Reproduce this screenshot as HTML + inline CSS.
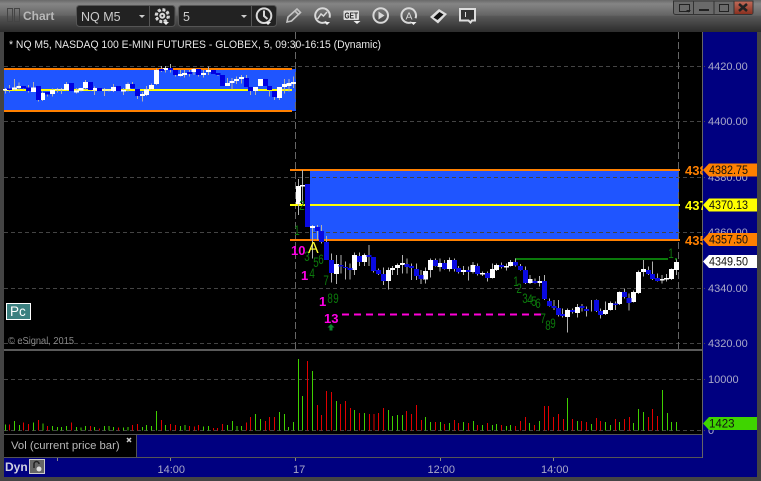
<!DOCTYPE html>
<html><head><meta charset="utf-8"><style>
html,body{margin:0;padding:0;background:#444;width:761px;height:481px;overflow:hidden}
svg{display:block}
text{font-family:"Liberation Sans",sans-serif;font-size:11px}
.ax{fill:#a9a9c8;font-size:11px}
.g{fill:#0c7a0c;font-size:14px}
.m{fill:#ff00e6;font-size:13px;font-weight:bold}
.tag{fill:#111;font-size:11.500px}
</style></head><body>
<svg width="761" height="481" viewBox="0 0 761 481" xmlns="http://www.w3.org/2000/svg">
<defs><linearGradient id="tb" x1="0" y1="0" x2="0" y2="1">
<stop offset="0" stop-color="#6a6a6a"/><stop offset=".12" stop-color="#858585"/><stop offset=".48" stop-color="#646464"/><stop offset=".5" stop-color="#585858"/><stop offset="1" stop-color="#2c2c2c"/></linearGradient>
<linearGradient id="cl" x1="0" y1="0" x2="0" y2="1"><stop offset="0" stop-color="#c06a58"/><stop offset="1" stop-color="#8a3020"/></linearGradient></defs>
<rect width="761" height="481" fill="#444"/>
<rect width="761" height="32" fill="url(#tb)"/>
<!-- pane -->
<rect x="4" y="32" width="699" height="318" fill="#000"/>
<rect x="4" y="351" width="699" height="84" fill="#000"/>
<rect x="703" y="32" width="54" height="426" fill="#000080"/>
<rect x="4" y="458" width="753" height="19" fill="#000080"/>
<rect x="136.500" y="435" width="566" height="23" fill="#000080"/>
<rect x="4" y="349" width="699" height="2" fill="#5a5a5a"/>
<rect x="4" y="435" width="132" height="23" fill="#000"/>
<rect x="4" y="434" width="699" height="1" fill="#555"/>
<rect x="136" y="435" width="1" height="23" fill="#555"/>
<rect x="4" y="457" width="699" height="1" fill="#555"/>
<rect x="702" y="32" width="1" height="426" fill="#666"/>
<!-- blue zones -->
<rect x="4" y="69" width="292" height="42" fill="#1f55ff"/>
<rect x="310" y="171" width="369" height="69" fill="#1f55ff"/>
<!-- grid -->
<g stroke="#444" stroke-width="1" stroke-dasharray="4 3" fill="none" shape-rendering="crispEdges">
<path d="M4 66.500H705M4 121.500H705M4 177.500H705M4 232.500H705M4 288.500H705M4 343.500H705M4 379.500H705M4 430.500H705"/>
</g>
<g stroke="#666" stroke-width="1" stroke-dasharray="7 3" fill="none" shape-rendering="crispEdges">
<path d="M295.500 32V349M678.500 32V349"/>
</g>
<!-- zone lines -->
<g shape-rendering="crispEdges">
<rect x="4" y="68" width="288" height="2" fill="#ff8000"/>
<rect x="4" y="110" width="288" height="2" fill="#ff8000"/>
<rect x="4" y="89" width="288" height="2" fill="#ffff00"/>
<rect x="290" y="169" width="390" height="2" fill="#ff8000"/>
<rect x="290" y="204" width="390" height="2" fill="#ffff00"/>
<rect x="290" y="239" width="390" height="2" fill="#ff8000"/>
<rect x="515" y="258" width="153" height="2" fill="#0a7a0a"/>
<rect x="675" y="258" width="2" height="2" fill="#0a7a0a"/>
</g>
<path d="M342 314.500H542" stroke="#ff00d8" stroke-width="2" stroke-dasharray="7 5" fill="none" shape-rendering="crispEdges"/>
<!-- premarket candles -->
<g transform="translate(0,60) scale(.33333)" fill="none" shape-rendering="crispEdges">
<path stroke="#b0b0b0" stroke-width="3" d="M16 84V100M28 75V98M43 57V92M57 68V90M71 78V90M85 75V98M100 66V96M115 78V125M127 95V123M142 96V110M157 85V110M172 84V98M185 84V102M199 66V92M214 69V93M229 84V100M243 84V95M257 60V90M271 66V92M284 80V105M298 84V93M313 84V108M327 88V95M341 72V96M355 78V93M370 84V105M384 68V95M398 66V85M412 87V117M427 96V125M440 78V108M454 70V90M469 25V75M484 18V36M497 18V38M511 12V38M526 30V50M541 30V50M554 30V52M568 30V50M582 24V45M596 27V50M610 30V52M625 20V45M640 30V42M654 39V48M667 45V78M682 54V78M696 54V88M710 50V72M724 45V70M739 45V81M751 81V105M766 81V105M781 57V78M796 57V78M809 78V110M824 93V120M838 81V120M853 57V100M867 57V95M881 50V84"/>
<path stroke="#fff" stroke-width="15" d="M16 87V92M43 82V88M57 78V84M100 82V96M127 99V120M157 90V102M172 88V90M185 88V90M199 72V90M229 92V98M243 84V92M257 66V84M284 84V92M313 88V92M327 88V92M341 81V93M370 90V95M384 72V87M427 102V108M440 88V105M454 75V87M469 30V72M497 24V30M541 42V48M554 39V45M582 27V36M610 39V45M625 30V36M682 69V78M696 63V69M710 57V63M724 51V57M766 81V93M781 57V78M838 81V114M853 72V81M867 69V78M881 66V72"/>
<path stroke="#0000e0" stroke-width="15" d="M28 85V90M71 78V86M85 82V93M115 78V120M142 96V104M214 69V93M271 66V90M298 84V93M355 78V93M398 72V85M412 87V108M484 27V33M511 24V30M526 30V45M568 36V42M596 27V45M640 30V42M654 39V45M667 45V78M739 54V81M751 81V93M796 57V78M809 78V90M824 93V111"/>
</g>
<!-- main candles -->
<g transform="translate(270,160) scale(.33333)" fill="none" shape-rendering="crispEdges">
<path stroke="#b0b0b0" stroke-width="3" d="M85 57V165M97 30V130M112 72V201M127 195V295M142 195V240M155 195V250M169 228V300M184 280V368M199 285V372M213 285V340M226 305V358M240 310V358M254 278V345M268 278V318M283 280V318M297 255V318M311 291V338M326 325V345M340 322V375M355 322V388M368 318V345M382 310V345M397 285V340M411 295V340M425 310V360M439 310V360M453 330V372M467 322V370M482 295V352M496 295V320M510 295V335M524 300V328M539 292V335M553 295V335M566 318V340M580 318V345M595 320V362"/>
<path stroke="#fff" stroke-width="15" d="M85 78V132M97 75V79M127 198V204M199 312V342M254 285V330M283 285V306M355 330V363M368 324V330M382 315V324M397 309V315M467 333V358M482 300V330M510 309V321M539 300V327M580 330V336"/>
<path stroke="#0a0ae0" stroke-width="15" d="M112 72V201M142 201V213M155 213V246M169 246V300M184 300V339M213 315V320M226 321V324M240 324V330M268 288V306M297 285V291M311 291V333M326 330V342M340 342V363M411 312V321M425 318V324M439 327V348M453 345V357M496 300V318M524 309V327M553 300V327M566 324V336M595 330V336"/>
</g>
<!-- right candles -->
<g transform="translate(470,160) scale(.33333)" fill="none" shape-rendering="crispEdges">
<path stroke="#b0b0b0" stroke-width="3" d="M9 306V340M23 310V346M38 335V348M52 335V365M67 310V356M80 310V333M95 308V325M109 310V332M122 300V320M137 295V320M152 312V332M166 320V372M180 345V372M195 355V370M209 348V380M224 345V420M238 415V440M252 420V450M266 420V470M278 445V472M292 445V518M308 445V460M322 432V472M336 432V455M350 440V470M364 420V455M379 418V456M392 445V475M406 425V465M421 425V452M436 425V450M449 395V435M463 385V415M477 400V452M491 392V428M505 332V402M520 300V350M535 320V345M548 305V360M562 340V365M576 345V370M590 342V365M604 325V360M619 298V345"/>
<path stroke="#fff" stroke-width="15" d="M9 315V336M38 339V344M67 327V354M80 315V330M109 318V323M122 306V318M180 357V369M209 363V369M292 450V471M322 441V459M406 450V462M421 429V450M449 396V432M491 396V426M505 336V399M520 327V336M576 357V362M590 354V359M604 327V357M619 306V330"/>
<path stroke="#0a0ae0" stroke-width="15" d="M23 318V342M52 339V354M95 315V321M137 306V316M152 318V330M166 330V369M195 363V369M224 363V417M238 423V438M252 438V444M266 444V465M278 462V468M308 450V456M336 438V444M350 447V453M379 420V453M392 453V465M436 430V435M463 396V411M477 414V429M535 330V342M548 342V357M562 354V363"/>
</g>
<!-- volume -->
<g transform="translate(0,345) scale(.33333)" fill="none" stroke-width="3" shape-rendering="crispEdges">
<path stroke="#3fd000" d="M16 238V256M43 228V256M58 240V256M100 232V256M129 236V256M157 243V256M172 246V256M185 246V256M199 243V256M229 246V256M243 248V256M256 243V256M284 246V256M313 243V256M327 243V256M341 246V256M370 248V256M384 246V256M427 246V256M439 240V256M454 243V256M469 198V256M497 240V256M541 243V256M555 240V256M611 245V256M625 243V256M682 240V256M697 228V256M711 243V256M725 243V256M767 207V256M782 222V256M838 201V256M853 207V256M866 246V256M880 231V256M895 42V256M907 153V256M937 78V256M1009 168V256M1064 195V256M1093 204V256"/>
<path stroke="#e00000" d="M28 238V256M71 232V256M86 237V256M115 225V256M142 243V256M214 232V256M271 243V256M298 250V256M355 247V256M398 240V256M412 237V256M484 225V256M511 237V256M526 240V256M569 243V256M583 245V256M596 240V256M640 249V256M653 249V256M668 237V256M739 232V256M752 216V256M796 228V256M809 216V256M824 216V256M922 48V256M952 180V256M965 210V256M980 138V256M994 141V256M1022 177V256M1036 168V256M1051 189V256M1079 204V256M1108 207V256M1122 207V256M1136 204V256"/>
</g>
<g transform="translate(380,345) scale(.33333)" fill="none" stroke-width="3" shape-rendering="crispEdges">
<path stroke="#3fd000" d="M25 195V256M38 213V256M52 210V256M67 210V256M137 216V256M151 231V256M181 231V256M208 234V256M250 231V256M280 228V256M307 240V256M338 240V256M350 237V256M380 243V256M392 240V256M449 234V256M478 228V256M563 159V256M592 228V256M634 237V256M677 231V256M691 240V256M719 231V256M760 234V256M775 192V256M790 201V256M847 135V256M862 204V256M874 231V256M889 231V256"/>
<path stroke="#e00000" d="M10 189V256M80 198V256M94 207V256M109 180V256M124 225V256M166 231V256M194 237V256M223 225V256M236 234V256M265 234V256M293 240V256M322 234V256M365 240V256M407 243V256M421 228V256M436 216V256M463 240V256M493 183V256M506 183V256M520 216V256M535 207V256M550 222V256M578 222V256M604 228V256M619 231V256M649 219V256M662 228V256M706 222V256M733 222V256M748 216V256M805 216V256M817 192V256M832 213V256"/>
</g>
<!-- numeric labels -->
<g transform="scale(.7,1)">
<text class="g" x="427.600" y="210">2</text><text class="g" x="420.400" y="235">1</text>
<text class="g" x="434.700" y="261">3</text><text class="g" x="447.600" y="267">5</text><text class="g" x="454.700" y="264">6</text>
<text class="g" x="441.900" y="278">4</text><text class="g" x="461.900" y="285">7</text>
<text class="g" x="467.600" y="303">8</text><text class="g" x="476.100" y="303">9</text>
<text class="g" x="733.300" y="286">1</text><text class="g" x="737.600" y="293">2</text><text class="g" x="746.100" y="303">3</text><text class="g" x="753.300" y="304">4</text><text class="g" x="759" y="306">5</text><text class="g" x="764.700" y="308">6</text>
<text class="g" x="771.900" y="323">7</text><text class="g" x="779" y="330">8</text><text class="g" x="786.100" y="328">9</text><text class="g" x="954.700" y="258">1</text>
</g>
<text class="m" x="291" y="255">10</text>
<text x="308" y="253" fill="#ffff30" style="font-size:16px">A</text>
<text class="m" x="301" y="280">1</text>
<text class="m" x="319" y="306">1</text>
<text class="m" x="324" y="323">13</text>
<path d="M331 324l3.500 3.500h-2v3h-3v-3h-2z" fill="#0c8a2c"/>
<!-- clipped zone labels -->
<svg x="685" y="160" width="18" height="90">
<text x="0" y="15" fill="#ff8000" style="font-size:13px;font-weight:bold">4382</text>
<text x="0" y="50" fill="#ffff00" style="font-size:13px;font-weight:bold">4370</text>
<text x="0" y="85" fill="#ff8000" style="font-size:13px;font-weight:bold">4357</text>
</svg>
<!-- axis labels -->
<text class="ax" x="708" y="70">4420.00</text><text class="ax" x="708" y="125">4400.00</text><text class="ax" x="708" y="181">4380.00</text><text class="ax" x="708" y="236">4360.00</text><text class="ax" x="708" y="292">4340.00</text><text class="ax" x="708" y="347">4320.00</text>
<text class="ax" x="708" y="383">10000</text><text class="ax" x="708" y="434">0</text>
<!-- tags -->
<path d="M703 170l6-6.500h48v13h-48z" fill="#ff8000"/><text class="tag" x="709" y="174" textLength="39" lengthAdjust="spacingAndGlyphs">4382.75</text>
<path d="M703 205l6-6.500h48v13h-48z" fill="#ffff00"/><text class="tag" x="709" y="209" textLength="39" lengthAdjust="spacingAndGlyphs">4370.13</text>
<path d="M703 239.500l6-6.500h48v13h-48z" fill="#ff8000"/><text class="tag" x="709" y="243.500" textLength="39" lengthAdjust="spacingAndGlyphs">4357.50</text>
<path d="M703 261.500l6-6.500h48v13h-48z" fill="#fff"/><text class="tag" x="709" y="265.500" textLength="39" lengthAdjust="spacingAndGlyphs">4349.50</text>
<path d="M703 423.500l6-6.500h48v13h-48z" fill="#3fd400"/><text class="tag" x="709" y="427.500">1423</text>
<!-- title etc -->
<text x="9" y="48" fill="#e8e8e8" textLength="372" lengthAdjust="spacingAndGlyphs">* NQ M5, NASDAQ 100 E-MINI FUTURES - GLOBEX, 5, 09:30-16:15 (Dynamic)</text>
<rect x="6.500" y="303.500" width="24" height="16" fill="#3c8080" stroke="#fff"/>
<text x="10" y="316" fill="#fff" style="font-size:13.500px">Pc</text>
<text x="8" y="344" fill="#888" style="font-size:10px" textLength="66" lengthAdjust="spacingAndGlyphs">© eSignal, 2015</text>
<text x="11" y="449" fill="#b8b8b8" style="font-size:11.300px">Vol (current price bar)</text>
<path d="M127 438l4 4M131 438l-4 4" stroke="#ccc" stroke-width="1.500"/>
<text x="5" y="471" fill="#d0d0e0" style="font-size:12px;font-weight:bold">Dyn</text>
<rect x="29.500" y="459.500" width="15" height="14" fill="#666" stroke="#ccc"/>
<path d="M34 468v-4a2.500 2.500 0 0 1 5 0" stroke="#222" stroke-width="1.500" fill="none"/><circle cx="39" cy="469" r="2.500" fill="#ddd"/>
<path d="M57.500 458v3M170.500 458v3M295.500 458v3M440.500 458v3M553.500 458v3" stroke="#888"/>
<text class="ax" x="157.500" y="473">14:00</text><text class="ax" x="293" y="473">17</text><text class="ax" x="427.500" y="473">12:00</text><text class="ax" x="541" y="473">14:00</text>
<!-- toolbar -->
<rect x="7.500" y="8.500" width="5" height="13" fill="none" stroke="#444"/><rect x="14.500" y="8.500" width="5" height="13" fill="none" stroke="#444"/>
<text x="23" y="20" fill="#b8b8b8" style="font-size:12px;font-weight:bold">Chart</text>
<g stroke="#555" fill="#222">
<rect x="76.500" y="5.500" width="98.500" height="21" rx="3"/>
<rect x="178.500" y="5.500" width="98" height="21" rx="3"/>
<path d="M149.500 6v20M251.500 6v20" fill="none"/>
</g>
<text x="81" y="21" fill="#ccc" style="font-size:12.500px">NQ M5</text><text x="183" y="21" fill="#ccc" style="font-size:12.500px">5</text>
<path d="M139 15h6l-3 3zM241 15h6l-3 3z" fill="#ccc"/>
<g fill="none" stroke="#d8d8d8" stroke-width="2">
<circle cx="162.300" cy="15.700" r="5.500" stroke-dasharray="3 1.300"/><circle cx="162.300" cy="15.700" r="2"/>
<circle cx="162.300" cy="15.700" r="7" stroke-width="1.200" stroke-dasharray="3 2.500"/>
<circle cx="264" cy="15.700" r="7.300"/><path d="M264 10.500v5.500l3.500 3"/>
<path d="M287 22l1-5 9-8 3.500 3.500-9 8.500zM295 11l3.500 3.500" stroke-width="1.600" stroke="#c4c4c4"/>
<path d="M326.500 21.700a7.300 7.300 0 1 1 3-4"/><path d="M317.500 19l3.500-5 2.500 2 3.500-4" stroke-width="1.500"/>
<circle cx="380.700" cy="15.500" r="7.300"/>
<path d="M411.500 22.300a7.300 7.300 0 1 1 4-4"/>
</g>
<path d="M163 22h6l-3 3zM265 22h6l-3 3zM324 22h6l-3 3zM353.500 21h7l-3.500 3zM410.500 22h6l-3 3z" fill="#eee"/>
<rect x="343.500" y="10.500" width="15.500" height="9.500" rx="1" fill="#ddd"/>
<text x="344.500" y="18.500" fill="#222" style="font-size:8px;font-weight:bold" textLength="13.500" lengthAdjust="spacingAndGlyphs">GET</text>
<path d="M378.500 11.500v8l6-4z" fill="#d8d8d8"/>
<text x="405.500" y="19.500" fill="#d8d8d8" style="font-size:10.500px">A</text>
<path d="M430 17l9-8 8 5-9 9.500z" fill="#ddd"/><path d="M433.500 17.500l6-5.500 4 2.500-6 5.500z" fill="#111"/>
<path d="M460 9h15v11.500h-3l-1.500 2-2-2h-8.500z" fill="#333" stroke="#ddd" stroke-width="2"/><path d="M465.500 12v5" stroke="#ddd"/>
<!-- window buttons -->
<path d="M673.500 1v11.500a2 2 0 0 0 2 2h75.500a2 2 0 0 0 2-2V1z" fill="#6a6a6a" stroke="#333"/>
<rect x="734" y="1.500" width="18.500" height="12.500" fill="url(#cl)"/>
<path d="M693.500 1v14M714 1v14M734 1v14" stroke="#333"/>
<path d="M679.500 4.500h10v7h-10z" fill="none" stroke="#222"/><path d="M686 10h5l-2.500 2.500z" fill="#222"/>
<rect x="699" y="9" width="10" height="2" fill="#222"/>
<rect x="719.500" y="4.500" width="9" height="7" fill="none" stroke="#222"/>
<path d="M739 4l8 7M747 4l-8 7" stroke="#222" stroke-width="2.500"/>
</svg>
</body></html>
